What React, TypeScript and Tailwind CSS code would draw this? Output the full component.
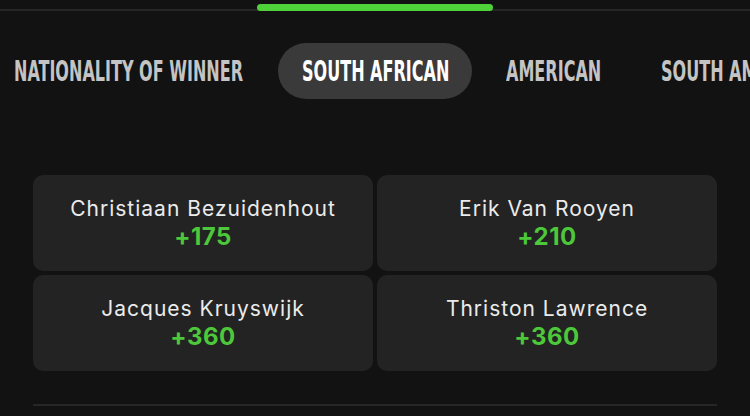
const tabs = [
  { label: "NATIONALITY OF WINNER", w: "w-[230px]" },
  { label: "SOUTH AFRICAN", w: "w-[146px]" },
  { label: "AMERICAN", w: "w-[97px]" },
  { label: "SOUTH AMERICAN", w: "w-[160px]" },
];

const players = [
  { name: "Christiaan Bezuidenhout", odds: "+175" },
  { name: "Erik Van Rooyen", odds: "+210" },
  { name: "Jacques Kruyswijk", odds: "+360" },
  { name: "Thriston Lawrence", odds: "+360" },
];

export default function App() {
  const active = 1;

  return (
    <div className="w-[750px] h-[416px] overflow-hidden bg-[#121212] flex flex-col">
      {/* scroll indicator */}
      <div className="relative h-[12px] shrink-0">
        <div className="absolute left-0 right-0 top-[9px] h-[2px] bg-[#262626]" />
        <div className="absolute left-[257px] top-[4px] w-[236px] h-[7px] rounded-full bg-[#4fd13a]" />
      </div>

      {/* tabs */}
      <div className="mt-[31px] flex items-center gap-[10px] -ml-[10px] whitespace-nowrap">
        {tabs.map((t, i) => (
          <div
            key={t.label}
            className={
              "h-[56px] px-6 flex items-center rounded-full shrink-0 " +
              (i === active ? "bg-[#3a3a3a] text-white" : "text-[#c4c4c4]")
            }
          >
            <div className={t.w + " translate-y-[2px]"}>
              <span
                className="inline-block origin-left scale-x-[0.81] scale-y-[1.25] text-[22px] font-bold leading-none"
                style={{ fontFamily: '"DejaVu Sans Condensed", sans-serif' }}
              >
                {t.label}
              </span>
            </div>
          </div>
        ))}
      </div>

      {/* selections */}
      <div className="mt-[76px] mx-[33px] grid grid-cols-2 gap-[4px]">
        {players.map((p) => (
          <div
            key={p.name}
            className="h-[96px] rounded-[10px] bg-[#232323] flex flex-col items-center justify-center"
            style={{ fontFamily: "Inter, sans-serif" }}
          >
            <div className="text-[21px] leading-[28px] tracking-[1px] text-[#ebebeb]">{p.name}</div>
            <div className="text-[24px] leading-[28px] tracking-[0.5px] font-bold text-[#4cc83a]">{p.odds}</div>
          </div>
        ))}
      </div>

      <div className="mt-[33px] mx-[33px] h-[2px] bg-[#262626]" />
    </div>
  );
}
